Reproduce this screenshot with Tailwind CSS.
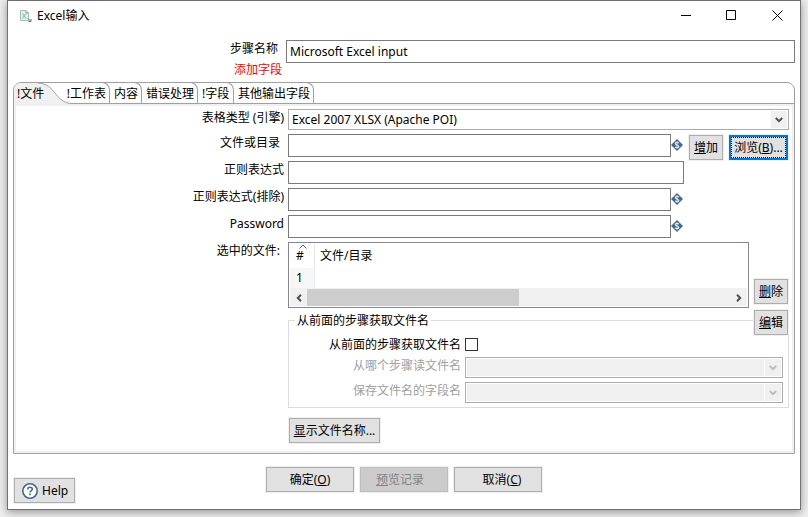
<!DOCTYPE html>
<html lang="zh-CN">
<head>
<meta charset="utf-8">
<meta name="viewport" content="width=device-width, initial-scale=1">
<title>Excel输入</title>
<script src="https://cdn.jsdelivr.net/npm/@tailwindcss/browser@4"></script>
</head>
<body class="flex min-h-screen flex-col bg-[#efefef] px-[7px] pb-[7px] font-['Noto_Sans','Noto_Sans_CJK_SC',sans-serif] text-xs leading-4 text-black">
<svg class="hidden" aria-hidden="true">
  <symbol id="var" viewBox="0 0 12 12"><path d="M6 0 12 6 6 12 0 6Z" fill="#44698a"/><path d="M7.9 4.1C7.4 3.4 6.8 3.2 6 3.2 4.900 3.200 4.200 3.700 4.200 4.500 4.200 6.300 7.900 5.500 7.900 7.500 7.900 8.300 7.100 8.800 6 8.800 5.100 8.800 4.500 8.500 4 7.900M6 2.200V9.800" fill="none" stroke="#dfe7ee" stroke-width="1.100"/></symbol>
  <symbol id="down" viewBox="0 0 8 6"><path d="M.8 1 4 4.200 7.200 1" fill="none" stroke="currentColor" stroke-width="2"/></symbol>
</svg>
<main class="flex flex-1 flex-col border border-[#707070] bg-white shadow-[0_2px_9px_rgba(0,0,0,0.4)]">
  <header class="flex h-[29px] items-center pl-[11px]">
    <svg class="mr-1 h-[14px] w-[14px]" viewBox="0 0 14 14" aria-hidden="true"><path d="M1.500 1.500H7L9.500 4V11.500H1.500Z" fill="#e3f1e6" stroke="#9fbfb0"/><path d="M7 1.500V4H9.500" fill="none" stroke="#8fa3b0"/><path d="M3.500 4.500 7 9.500M7 4.500 3.500 9.500" stroke="#7fb592"/><path d="M9 9.500 11.500 12M12 10V12.500H9.500" fill="none" stroke="#54748c"/></svg>
    <h1 class="flex-1">Excel输入</h1>
    <button class="flex h-full w-[46px] items-center justify-center" aria-label="最小化"><svg class="h-[11px] w-[11px]" viewBox="0 0 11 11"><path d="M1 5.500H11" stroke="#000"/></svg></button>
    <button class="flex h-full w-[46px] items-center justify-center" aria-label="最大化"><svg class="h-[11px] w-[11px]" viewBox="0 0 11 11"><path d="M.5.500H9.500V9.500H.5Z" fill="none" stroke="#000"/></svg></button>
    <button class="flex h-full w-[46px] items-center justify-center" aria-label="关闭"><svg class="h-[11px] w-[11px]" viewBox="0 0 11 11"><path d="M.5.500 10.500 10.500M10.500.500.500 10.500" stroke="#000"/></svg></button>
  </header>

  <section class="mt-[10px] grid grid-cols-[265px_1fr] gap-x-2 px-[5px]">
    <label for="step" class="text-right leading-[18px]">步骤名称</label>
    <input id="step" value="Microsoft Excel input" class="h-[23px] w-full border border-[#7a7a7a] px-[3px]">
    <p class="-mr-1 -mt-[2px] text-right leading-[18px] text-[#ff0000]">添加字段</p>
  </section>

  <section class="mx-[5px] mt-[3px] flex flex-1 flex-col rounded-t-lg border border-[#a0a0a0]">
    <nav role="tablist" class="flex h-[21px] border-b border-[#a0a0a0]">
      <button role="tab" aria-selected="true" class="relative h-[21px] w-[48px] pl-[3px] text-left">
        <svg class="absolute left-0 top-0 h-[21px] w-[58px]" viewBox="0 0 58 21" aria-hidden="true"><path d="M0 21V6Q1 0 7 0H24C33 .5 37 5 41 10S50 20.500 58 20.500V21Z" fill="#f0f0f0"/><path d="M24 0C33 .5 37 5 41 10S50 20.500 58 20.500" fill="none" stroke="#a0a0a0"/></svg>
        <span class="relative">!文件</span></button>
      <button role="tab" class="-mt-px h-[21px] w-[48px] rounded-tr-lg border-r border-t border-[#a0a0a0] pr-[3px] pt-[2px] text-right">!工作表</button>
      <button role="tab" class="-mt-px h-[21px] w-8 rounded-tr-lg border-r border-t border-[#a0a0a0] pl-1 pt-[2px] text-left">内容</button>
      <button role="tab" class="-mt-px h-[21px] w-14 rounded-tr-lg border-r border-t border-[#a0a0a0] pl-1 pt-[2px] text-left">错误处理</button>
      <button role="tab" class="-mt-px h-[21px] w-9 rounded-tr-lg border-r border-t border-[#a0a0a0] pl-1 pt-[2px] text-left">!字段</button>
      <button role="tab" class="-mt-px h-[21px] w-20 rounded-tr-lg border-r border-t border-[#a0a0a0] pl-1 pt-[2px] text-left">其他输出字段</button>
    </nav>
    <div role="tabpanel" class="flex-1 border-2 border-[#f0f0f0] pb-2 pr-[3px] pt-[3px]">
      <div class="grid grid-cols-[268px_1fr] gap-1">
        <label for="engine" class="text-right leading-[18px]">表格类型 (引擎)</label>
        <div class="relative">
          <select id="engine" class="block h-[21px] w-full appearance-none border border-[#acacac] bg-white px-[3px]"><option>Excel 2007 XLSX (Apache POI)</option></select>
          <span class="pointer-events-none absolute bottom-[2px] right-[2px] top-[2px] flex w-4 items-center justify-center bg-[#f0f0f0] text-[#505050]"><svg class="h-[6px] w-2"><use href="#down"/></svg></span>
        </div>

        <label for="file" class="pr-1 text-right leading-[18px]">文件或目录</label>
        <div class="flex h-[23px] items-start">
          <input id="file" class="h-[23px] min-w-0 flex-1 border border-[#7a7a7a] px-[3px]">
          <svg class="mr-[6px] mt-[5px] h-3 w-3" aria-hidden="true"><use href="#var"/></svg>
          <button class="mr-[6px] mt-px h-[25px] w-[34px] border border-[#adadad] bg-[#e1e1e1] shadow-[0_0_0_1px_#f0f0f0]"><u>增</u>加</button>
          <button class="mr-px mt-px h-[25px] w-[59px] border-2 border-[#0078d7] bg-[#e1e1e1] shadow-[0_0_0_1px_#f0f0f0]"><span class="flex h-full items-center justify-center whitespace-nowrap border border-dotted border-black">浏览(<u>B</u>)...</span></button>
        </div>

        <label for="regex" class="text-right leading-[18px]">正则表达式</label>
        <div class="pr-[105px]"><input id="regex" class="block h-[23px] w-full border border-[#7a7a7a] px-[3px]"></div>

        <label for="exclude" class="text-right leading-[18px]">正则表达式(排除)</label>
        <div class="flex items-start pr-[106px]">
          <input id="exclude" class="h-[23px] min-w-0 flex-1 border border-[#7a7a7a] px-[3px]">
          <svg class="mt-[5px] h-3 w-3" aria-hidden="true"><use href="#var"/></svg>
        </div>

        <label for="pass" class="text-right leading-[18px]">Password</label>
        <div class="flex items-start pr-[106px]">
          <input id="pass" type="password" class="h-[23px] min-w-0 flex-1 border border-[#7a7a7a] px-[3px]">
          <svg class="mt-[5px] h-3 w-3" aria-hidden="true"><use href="#var"/></svg>
        </div>

        <p class="pr-1 text-right leading-[18px]">选中的文件:</p>
        <div class="flex h-[66px] items-start gap-[5px] pr-px">
          <div class="h-[66px] min-w-0 flex-1 border border-[#828790] p-px">
            <table class="w-full table-fixed border-separate border-spacing-0 text-left">
              <thead><tr class="h-6">
                <th class="relative w-[25px] border-r border-[#e5e5e5] p-0 pl-[6px] font-normal"><svg class="absolute left-[9px] top-0 h-[5px] w-2" viewBox="0 0 8 5" aria-hidden="true"><path d="M.5 4.500 4 1 7.500 4.500" fill="none" stroke="#606060"/></svg>#</th>
                <th class="p-0 pl-[5px] font-normal">文件/目录</th></tr></thead>
              <tbody><tr class="h-[21px]"><td class="border-b border-r border-b-[#f0f0f0] border-r-[#e8eef8] bg-[#f7f7f7] p-0 pl-[6px]">1</td><td class="border-b border-[#f0f0f0] p-0"></td></tr></tbody>
            </table>
            <div class="flex h-[17px] items-stretch bg-[#f0f0f0] text-[#505050]" aria-hidden="true">
              <span class="flex w-[17px] items-center justify-center"><svg class="h-2 w-[6px]" viewBox="0 0 6 8"><path d="M5 .8 1.800 4 5 7.200" fill="none" stroke="currentColor" stroke-width="2"/></svg></span>
              <span class="flex flex-1"><span class="w-1/2 bg-[#cdcdcd]"></span></span>
              <span class="flex w-[17px] items-center justify-center"><svg class="h-2 w-[6px]" viewBox="0 0 6 8"><path d="M1 .8 4.200 4 1 7.200" fill="none" stroke="currentColor" stroke-width="2"/></svg></span>
            </div>
          </div>
          <div class="z-10 flex flex-col gap-[6px] pt-[37px]">
            <button class="h-[25px] w-[34px] border border-[#adadad] bg-[#e1e1e1] shadow-[0_0_0_1px_#f0f0f0]"><u>删</u>除</button>
            <button class="h-[25px] w-[34px] border border-[#adadad] bg-[#e1e1e1] shadow-[0_0_0_1px_#f0f0f0]"><u>编</u>辑</button>
          </div>
        </div>

        <fieldset class="col-start-2 min-w-0 border border-[#dcdcdc] pb-1 pr-[5px]">
          <legend class="ml-[6px] h-4 px-[2px] leading-[18px]">从前面的步骤获取文件名</legend>
          <div class="grid grid-cols-[172px_1fr] gap-1 pt-2">
            <label for="prev" class="h-[17px] text-right leading-[18px]">从前面的步骤获取文件名</label>
            <div class="flex h-[17px] items-center"><input id="prev" type="checkbox" class="h-[13px] w-[13px] appearance-none border border-[#333] bg-white"></div>
            <label for="from" class="text-right leading-[18px] text-[#a0a0a0]">从哪个步骤读文件名</label>
            <div class="relative">
              <select id="from" disabled class="block h-[21px] w-full appearance-none border border-[#acacac] bg-[#f0f0f0] shadow-[inset_0_0_0_1px_#fff]"></select>
              <span class="pointer-events-none absolute bottom-[2px] right-[2px] top-[2px] flex w-[17px] items-center justify-center border-l border-white text-[#bcbcbc]"><svg class="h-[6px] w-2"><use href="#down"/></svg></span>
            </div>
            <label for="save" class="text-right leading-[18px] text-[#a0a0a0]">保存文件名的字段名</label>
            <div class="relative">
              <select id="save" disabled class="block h-[21px] w-full appearance-none border border-[#acacac] bg-[#f0f0f0] shadow-[inset_0_0_0_1px_#fff]"></select>
              <span class="pointer-events-none absolute bottom-[2px] right-[2px] top-[2px] flex w-[17px] items-center justify-center border-l border-white text-[#bcbcbc]"><svg class="h-[6px] w-2"><use href="#down"/></svg></span>
            </div>
          </div>
        </fieldset>

        <div class="col-start-2 pl-px pt-[6px]">
          <button class="block h-[25px] w-[91px] border border-[#adadad] bg-[#e1e1e1] shadow-[0_0_0_1px_#f0f0f0]"><u>显</u>示文件名称...</button>
        </div>
      </div>
    </div>
  </section>

  <footer class="grid grid-cols-[1fr_auto_1fr] px-[6px] pb-[6px] pt-[13px]">
    <button class="mt-[11px] flex h-[25px] w-[61px] items-center gap-1 border border-[#adadad] bg-[#e1e1e1] pl-[7px] shadow-[0_0_0_1px_#f0f0f0]">
      <svg class="h-4 w-4" viewBox="0 0 16 16" aria-hidden="true"><circle cx="8" cy="8" r="7.200" fill="#fff" stroke="#44698a" stroke-width="1.600"/><path d="M5.800 6.400C5.800 5 6.700 4.300 8 4.300S10.300 5 10.300 6.200C10.300 7.600 8 7.800 8 9.500" fill="none" stroke="#44698a" stroke-width="1.500"/><path d="M7.200 10.600H8.800V12.200H7.200Z" fill="#44698a"/></svg>Help</button>
    <div class="flex gap-[6px]">
      <button class="h-[25px] w-[88px] border border-[#adadad] bg-[#e1e1e1] shadow-[0_0_0_1px_#f0f0f0]">确定(<u>O</u>)</button>
      <button disabled class="h-[25px] w-[88px] border border-[#bfbfbf] bg-[#cccccc] pr-2 text-[#838383] shadow-[0_0_0_1px_#f0f0f0]"><u>预</u>览记录</button>
      <button class="h-[25px] w-[88px] border border-[#adadad] bg-[#e1e1e1] pl-2 shadow-[0_0_0_1px_#f0f0f0]">取消(<u>C</u>)</button>
    </div>
  </footer>
</main>
</body>
</html>
